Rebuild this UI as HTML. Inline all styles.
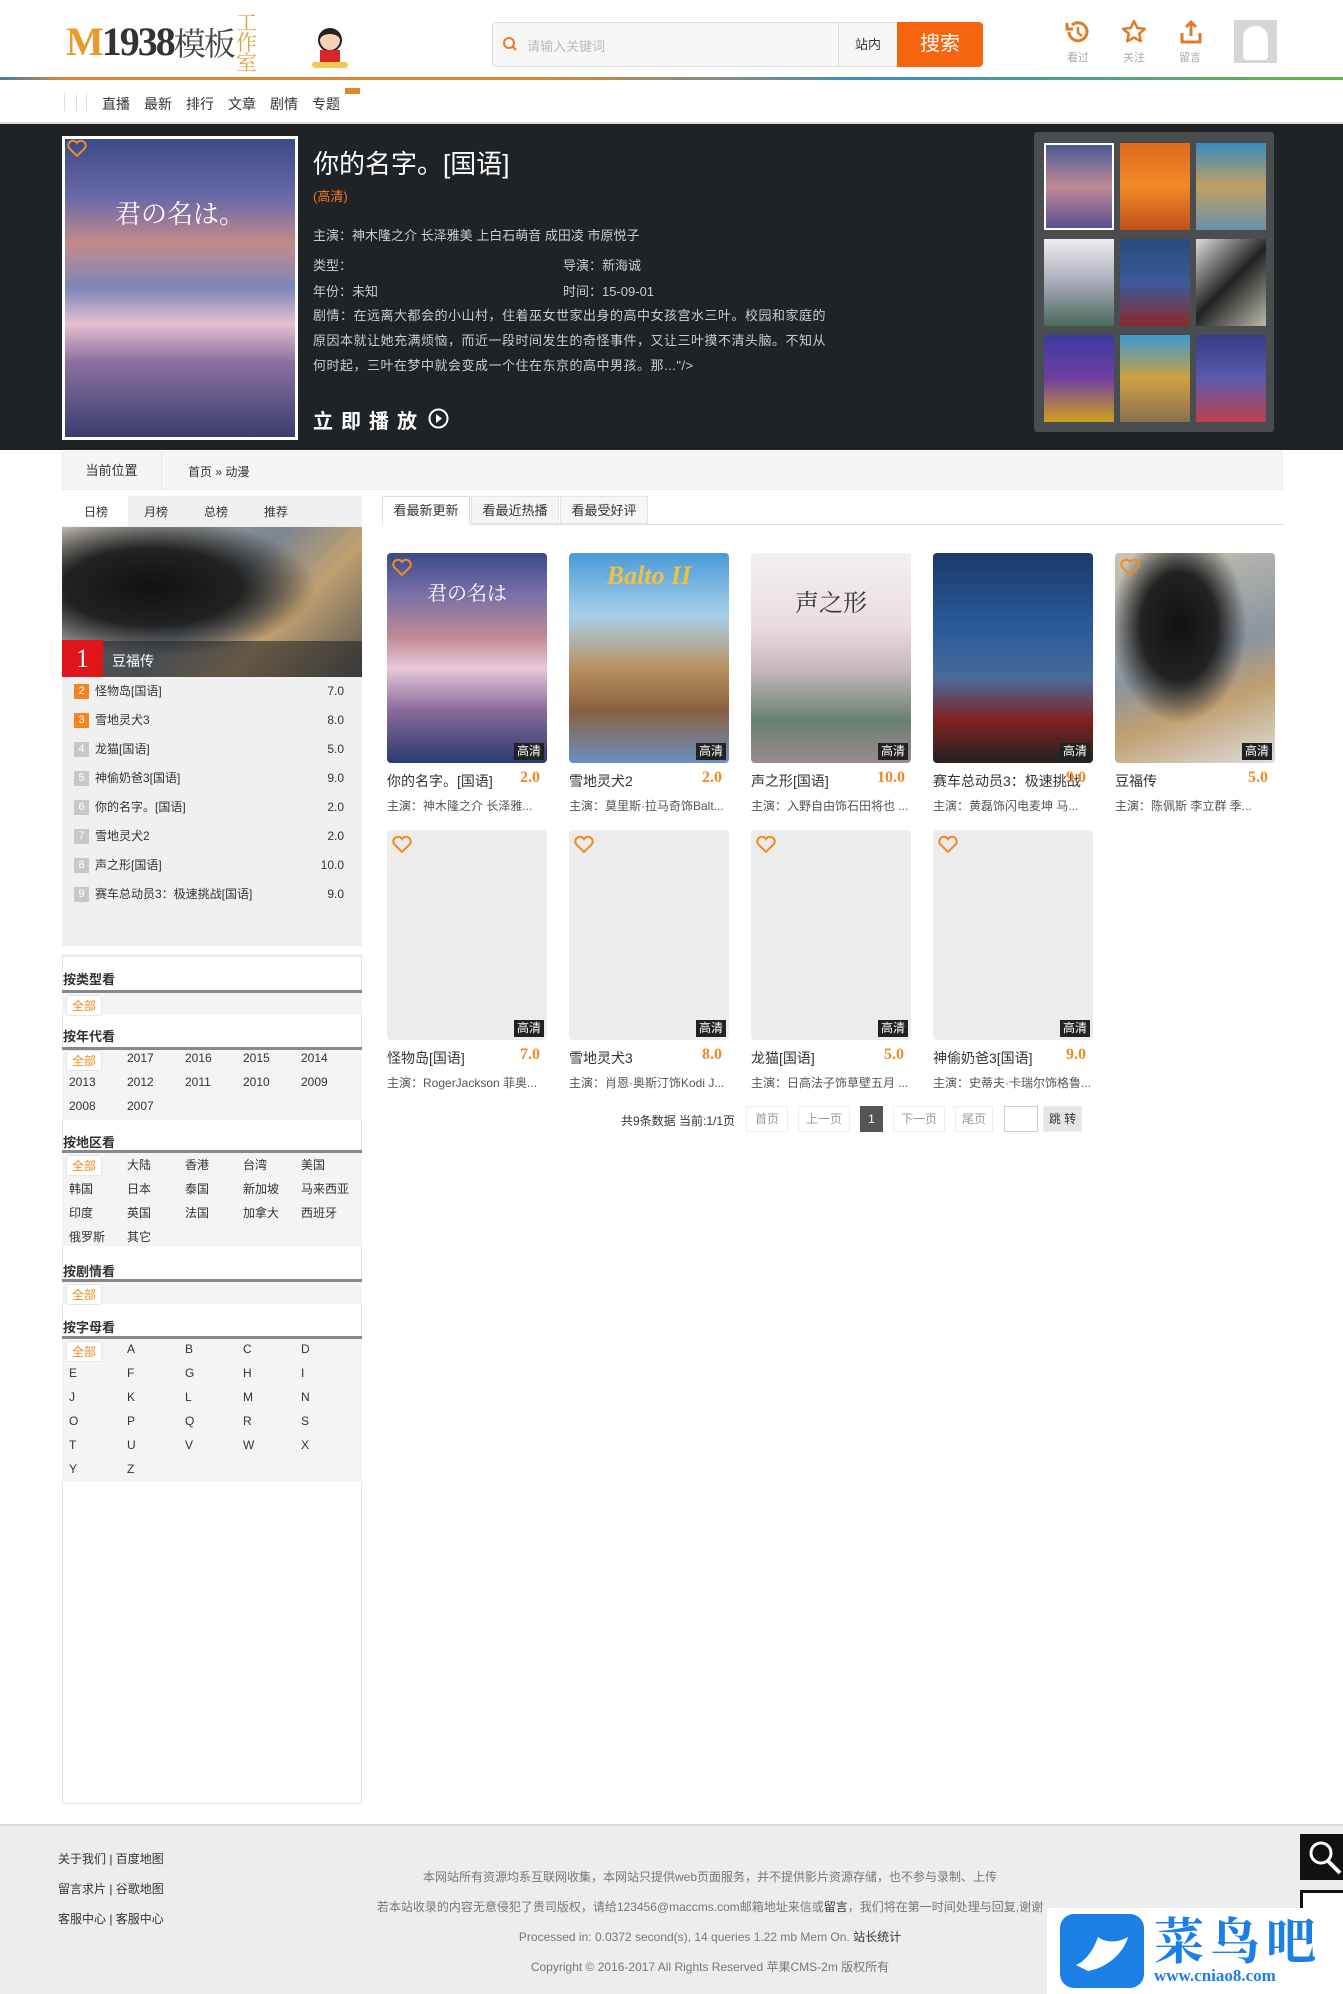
<!DOCTYPE html>
<html><head><meta charset="utf-8">
<style>
*{margin:0;padding:0;box-sizing:border-box}
body{width:1343px;height:1994px;position:relative;background:#fff;font-family:"Liberation Sans","Noto Sans CJK SC",sans-serif;font-size:12px;color:#333;overflow:hidden}
.a{position:absolute}
.hd{white-space:nowrap}
.poster{border-radius:4px;overflow:hidden}
.hq{position:absolute;right:3px;bottom:3px;background:#222;color:#fff;font-size:12px;padding:0 3px;line-height:17px}
.ttl{font-size:14px;color:#333}
.sc{font-family:"Liberation Serif",serif;font-weight:bold;color:#f08a24;font-size:16px}
.act{font-size:12px;color:#555}
.rk{font-size:12px;color:#333}
.num{display:inline-block;width:15px;height:15px;line-height:15px;text-align:center;color:#fff;font-size:11px;background:#c8c8c8;margin-right:6px;vertical-align:middle}
.fh{font-size:13px;color:#333;font-weight:bold}
.fl{position:absolute;left:62px;width:300px;border-top:3px solid #888;background:#f4f4f4}
.cell{position:absolute;font-size:12px;color:#333}
.all{color:#f08a24;background:#fff;border:1px solid #e5e5e5;border-radius:3px;padding:1px 5px}
.pg{position:absolute;top:1106px;height:26px;line-height:24px;border:1px solid #eee;color:#999;text-align:center;font-size:12px}
.ft{font-size:12px;color:#777}
</style></head><body>

<div class="a hd" style="left:66px;top:18px;font-family:'Liberation Serif',serif;font-size:40px;font-weight:bold;letter-spacing:-2px;color:#e89a2a;line-height:48px">M<span style="color:#333">1938</span><span style="color:#444;font-weight:normal;font-family:'Noto Serif CJK SC',serif;font-size:32px">模板</span></div>
<div class="a" style="left:236px;top:12px;width:28px;color:#e0a040;font-size:21px;line-height:20px;font-family:'Noto Serif CJK SC',serif">工<br>作<br>室</div>
<div class="a" style="left:318px;top:28px;width:24px;height:24px;border-radius:50%;background:#f3d3b3;border:2px solid #222;border-top-width:6px"></div>
<div class="a" style="left:320px;top:50px;width:20px;height:12px;background:#d7262b"></div>
<div class="a" style="left:312px;top:62px;width:36px;height:6px;background:#f2c94c;border-radius:3px"></div>

<div class="a" style="left:492px;top:22px;width:491px;height:45px;border:1px solid #ddd;border-radius:4px;background:#f7f7f7"></div>
<svg class="a" style="left:502px;top:36px" width="16" height="16" viewBox="0 0 16 16"><circle cx="7" cy="7" r="5" fill="none" stroke="#f0782a" stroke-width="2"/><path d="M10.5 10.5L14 14" stroke="#f0782a" stroke-width="2"/></svg>
<div class="a" style="left:527px;top:36px;color:#bbb;font-size:13px">请输入关键词</div>
<div class="a" style="left:838px;top:23px;width:59px;height:43px;border-left:1px solid #ddd;text-align:center;line-height:43px;font-size:13px">站内</div>
<div class="a" style="left:897px;top:22px;width:86px;height:45px;background:#f5640f;color:#fff;font-size:20px;text-align:center;line-height:45px;border-radius:0 4px 4px 0">搜索</div>

<svg class="a" style="left:1064px;top:18px" width="28" height="28" viewBox="0 0 28 28"><path d="M5 14a9 9 0 1 0 3-7" fill="none" stroke="#e07b2a" stroke-width="3"/><path d="M3 5v6h6" fill="none" stroke="#e07b2a" stroke-width="3"/><path d="M14 9v6l4 3" fill="none" stroke="#e07b2a" stroke-width="2.5"/></svg>
<svg class="a" style="left:1120px;top:18px" width="28" height="28" viewBox="0 0 28 28"><path d="M14 3l3.3 7 7.5.8-5.6 5 1.6 7.5L14 19.5 7.2 23.3 8.8 15.8 3.2 10.8l7.5-.8z" fill="none" stroke="#e07b2a" stroke-width="2.5" stroke-linejoin="round"/></svg>
<svg class="a" style="left:1177px;top:18px" width="28" height="28" viewBox="0 0 28 28"><path d="M5 15v9h18v-9" fill="none" stroke="#e07b2a" stroke-width="3"/><path d="M14 4v14M9 9l5-5 5 5" fill="none" stroke="#e07b2a" stroke-width="3"/></svg>
<div class="a" style="left:1067px;top:49px;font-size:11px;color:#aaa">看过</div>
<div class="a" style="left:1123px;top:49px;font-size:11px;color:#aaa">关注</div>
<div class="a" style="left:1179px;top:49px;font-size:11px;color:#aaa">留言</div>
<div class="a" style="left:1234px;top:20px;width:43px;height:43px;background:#d6d6d6;overflow:hidden"><div style="position:absolute;left:9px;top:6px;width:25px;height:34px;background:#fff;border-radius:12px 12px 4px 4px"></div></div>

<div class="a" style="left:0;top:77px;width:1343px;height:3px;background:linear-gradient(90deg,#3d7fa5 0%,#e0873a 5%,#d9883a 40%,#3d8fbf 65%,#6ab43f 100%)"></div>

<div class="a" style="left:64px;top:93px;width:1px;height:18px;background:#ddd"></div>
<div class="a" style="left:76px;top:93px;width:1px;height:18px;background:#ddd"></div>
<div class="a" style="left:86px;top:93px;width:1px;height:18px;background:#ddd"></div>
<div class="a hd" style="left:102px;top:94px;font-size:14px"><span style="margin-right:14px">直播</span><span style="margin-right:14px">最新</span><span style="margin-right:14px">排行</span><span style="margin-right:14px">文章</span><span style="margin-right:14px">剧情</span><span>专题</span></div>
<div class="a" style="left:345px;top:88px;width:15px;height:6px;background:#e08a2a"></div>
<div class="a" style="left:0;top:122px;width:1343px;height:2px;background:#ddd"></div>

<div class="a" style="left:0;top:124px;width:1343px;height:326px;background:#1f2326"></div>
<div class="a" style="left:62px;top:136px;width:236px;height:304px;border:3px solid #fff;background:linear-gradient(180deg,#3a4a85 0%,#6a6aa8 20%,#c58a8a 35%,#7b86b8 50%,#e6c0d0 62%,#8a70a0 75%,#3c3c70 100%)">
<div style="position:absolute;left:0;width:100%;top:55px;text-align:center;color:#fff;font-size:26px;font-family:'Noto Serif CJK SC',serif">君の名は。</div></div>
<div class="a hd" style="left:313px;top:144px;color:#fff;font-size:26px">你的名字。[国语]</div>
<div class="a" style="left:313px;top:186px;color:#f0782a;font-size:13px">(高清)</div>
<div class="a hd" style="left:313px;top:225px;color:#ccc;font-size:13px">主演：神木隆之介 长泽雅美 上白石萌音 成田凌 市原悦子</div>
<div class="a" style="left:313px;top:255px;color:#ccc;font-size:13px">类型：</div>
<div class="a" style="left:563px;top:255px;color:#ccc;font-size:13px">导演：新海诚</div>
<div class="a" style="left:313px;top:281px;color:#ccc;font-size:13px">年份：未知</div>
<div class="a" style="left:563px;top:281px;color:#ccc;font-size:13px">时间：15-09-01</div>
<div class="a" style="left:313px;top:303px;width:515px;color:#ccc;font-size:13px;letter-spacing:0.5px;line-height:25px">剧情：在远离大都会的小山村，住着巫女世家出身的高中女孩宫水三叶。校园和家庭的原因本就让她充满烦恼，而近一段时间发生的奇怪事件，又让三叶摸不清头脑。不知从何时起，三叶在梦中就会变成一个住在东京的高中男孩。那..."/&gt;</div>
<div class="a hd" style="left:313px;top:405px;color:#fff;font-size:20px;font-weight:bold;letter-spacing:8px">立即播放</div>
<svg class="a" style="left:428px;top:408px" width="21" height="21" viewBox="0 0 21 21"><circle cx="10.5" cy="10.5" r="9" fill="none" stroke="#fff" stroke-width="2"/><path d="M8 6l6 4.5-6 4.5z" fill="#fff"/></svg>

<div class="a" style="left:1034px;top:132px;width:240px;height:300px;background:#4a4d50;border-radius:3px"></div>
<div class="a" style="left:1044px;top:143px;width:70px;height:87px;border:2px solid #fff;background:linear-gradient(#4a5a95,#c08a95,#5a5090)"></div>
<div class="a" style="left:1120px;top:143px;width:70px;height:87px;background:linear-gradient(#e06a1a,#f08a2a,#c0501a)"></div>
<div class="a" style="left:1196px;top:143px;width:70px;height:87px;background:linear-gradient(#3a8ac0,#c0a060,#6a90b0)"></div>
<div class="a" style="left:1044px;top:239px;width:70px;height:87px;background:linear-gradient(#eee,#aab,#4a6a5a)"></div>
<div class="a" style="left:1120px;top:239px;width:70px;height:87px;background:linear-gradient(#2a4a7a,#3a5a9a,#8a2a2a)"></div>
<div class="a" style="left:1196px;top:239px;width:70px;height:87px;background:linear-gradient(135deg,#ddd,#222 50%,#bba)"></div>
<div class="a" style="left:1044px;top:335px;width:70px;height:87px;background:linear-gradient(#3a3aa0,#7040a0,#d0a020)"></div>
<div class="a" style="left:1120px;top:335px;width:70px;height:87px;background:linear-gradient(#3a9ad0,#d0a040,#8a7050)"></div>
<div class="a" style="left:1196px;top:335px;width:70px;height:87px;background:linear-gradient(#3a3a8a,#5a5aaa,#c04050)"></div>

<div class="a" style="left:62px;top:451px;width:1221px;height:39px;background:#f5f5f5;border:1px solid #eee"></div>
<div class="a" style="left:62px;top:451px;width:100px;height:39px;border-right:1px solid #e5e5e5;text-align:center;line-height:39px;font-size:13px">当前位置</div>
<div class="a" style="left:188px;top:463px;font-size:12px">首页 » 动漫</div>

<div class="a" style="left:62px;top:496px;width:300px;height:450px;background:#f0f0f0"></div>
<div class="a" style="left:62px;top:496px;width:66px;height:30px;background:#fff"></div>
<div class="a hd" style="left:84px;top:503px;font-size:12px"><span style="margin-right:36px">日榜</span><span style="margin-right:36px">月榜</span><span style="margin-right:36px">总榜</span><span>推荐</span></div>
<div class="a" style="left:62px;top:527px;width:300px;height:150px;background:radial-gradient(ellipse at 30% 40%,#111 0%,#222 30%,transparent 55%),linear-gradient(135deg,#bcb5a8,#7a8590 50%,#c0a070 70%,#555)"></div>
<div class="a" style="left:62px;top:641px;width:300px;height:36px;background:rgba(40,40,40,.6)"></div>
<div class="a" style="left:62px;top:640px;width:41px;height:37px;background:#e0151a;color:#fff;font-size:26px;text-align:center;line-height:37px;font-family:'Liberation Serif',serif">1</div>
<div class="a" style="left:112px;top:651px;color:#fff;font-size:14px">豆福传</div>
<div class="a" style="left:74px;top:683px;width:270px">
<div style="height:29px;line-height:17px" class="rk"><span class="num" style="background:#f5831f">2</span>怪物岛[国语]<span style="float:right">7.0</span></div>
<div style="height:29px;line-height:17px" class="rk"><span class="num" style="background:#f5831f">3</span>雪地灵犬3<span style="float:right">8.0</span></div>
<div style="height:29px;line-height:17px" class="rk"><span class="num">4</span>龙猫[国语]<span style="float:right">5.0</span></div>
<div style="height:29px;line-height:17px" class="rk"><span class="num">5</span>神偷奶爸3[国语]<span style="float:right">9.0</span></div>
<div style="height:29px;line-height:17px" class="rk"><span class="num">6</span>你的名字。[国语]<span style="float:right">2.0</span></div>
<div style="height:29px;line-height:17px" class="rk"><span class="num">7</span>雪地灵犬2<span style="float:right">2.0</span></div>
<div style="height:29px;line-height:17px" class="rk"><span class="num">8</span>声之形[国语]<span style="float:right">10.0</span></div>
<div style="height:29px;line-height:17px" class="rk"><span class="num">9</span>赛车总动员3：极速挑战[国语]<span style="float:right">9.0</span></div>
</div>

<div class="a" style="left:62px;top:954px;width:300px;height:850px;border:1px solid #e5e5e5;border-top:3px solid #eee"></div>
<div class="a fh" style="left:63px;top:969px">按类型看</div>
<div class="fl" style="top:990px;height:24px"></div>
<div class="cell all" style="left:66px;top:995px">全部</div>

<div class="a fh" style="left:63px;top:1026px">按年代看</div>
<div class="fl" style="top:1047px;height:73px"></div>
<div class="cell all" style="left:66px;top:1050px">全部</div>
<div class="cell" style="left:127px;top:1051px">2017</div><div class="cell" style="left:185px;top:1051px">2016</div><div class="cell" style="left:243px;top:1051px">2015</div><div class="cell" style="left:301px;top:1051px">2014</div>
<div class="cell" style="left:69px;top:1075px">2013</div><div class="cell" style="left:127px;top:1075px">2012</div><div class="cell" style="left:185px;top:1075px">2011</div><div class="cell" style="left:243px;top:1075px">2010</div><div class="cell" style="left:301px;top:1075px">2009</div>
<div class="cell" style="left:69px;top:1099px">2008</div><div class="cell" style="left:127px;top:1099px">2007</div>

<div class="a fh" style="left:63px;top:1132px">按地区看</div>
<div class="fl" style="top:1150px;height:96px"></div>
<div class="cell all" style="left:66px;top:1155px">全部</div>
<div class="cell" style="left:127px;top:1156px">大陆</div><div class="cell" style="left:185px;top:1156px">香港</div><div class="cell" style="left:243px;top:1156px">台湾</div><div class="cell" style="left:301px;top:1156px">美国</div>
<div class="cell" style="left:69px;top:1180px">韩国</div><div class="cell" style="left:127px;top:1180px">日本</div><div class="cell" style="left:185px;top:1180px">泰国</div><div class="cell" style="left:243px;top:1180px">新加坡</div><div class="cell" style="left:301px;top:1180px">马来西亚</div>
<div class="cell" style="left:69px;top:1204px">印度</div><div class="cell" style="left:127px;top:1204px">英国</div><div class="cell" style="left:185px;top:1204px">法国</div><div class="cell" style="left:243px;top:1204px">加拿大</div><div class="cell" style="left:301px;top:1204px">西班牙</div>
<div class="cell" style="left:69px;top:1228px">俄罗斯</div><div class="cell" style="left:127px;top:1228px">其它</div>

<div class="a fh" style="left:63px;top:1261px">按剧情看</div>
<div class="fl" style="top:1279px;height:25px"></div>
<div class="cell all" style="left:66px;top:1284px">全部</div>

<div class="a fh" style="left:63px;top:1317px">按字母看</div>
<div class="fl" style="top:1336px;height:146px"></div>
<div class="cell all" style="left:66px;top:1341px">全部</div>
<div class="cell" style="left:127px;top:1342px">A</div><div class="cell" style="left:185px;top:1342px">B</div><div class="cell" style="left:243px;top:1342px">C</div><div class="cell" style="left:301px;top:1342px">D</div>
<div class="cell" style="left:69px;top:1366px">E</div><div class="cell" style="left:127px;top:1366px">F</div><div class="cell" style="left:185px;top:1366px">G</div><div class="cell" style="left:243px;top:1366px">H</div><div class="cell" style="left:301px;top:1366px">I</div>
<div class="cell" style="left:69px;top:1390px">J</div><div class="cell" style="left:127px;top:1390px">K</div><div class="cell" style="left:185px;top:1390px">L</div><div class="cell" style="left:243px;top:1390px">M</div><div class="cell" style="left:301px;top:1390px">N</div>
<div class="cell" style="left:69px;top:1414px">O</div><div class="cell" style="left:127px;top:1414px">P</div><div class="cell" style="left:185px;top:1414px">Q</div><div class="cell" style="left:243px;top:1414px">R</div><div class="cell" style="left:301px;top:1414px">S</div>
<div class="cell" style="left:69px;top:1438px">T</div><div class="cell" style="left:127px;top:1438px">U</div><div class="cell" style="left:185px;top:1438px">V</div><div class="cell" style="left:243px;top:1438px">W</div><div class="cell" style="left:301px;top:1438px">X</div>
<div class="cell" style="left:69px;top:1462px">Y</div><div class="cell" style="left:127px;top:1462px">Z</div>

<div class="a" style="left:382px;top:524px;width:901px;height:1px;background:#ddd"></div>
<div class="a" style="left:382px;top:496px;width:88px;height:29px;border:1px solid #ddd;border-bottom-color:#fff;background:#fff;text-align:center;line-height:27px;font-size:13px">看最新更新</div>
<div class="a" style="left:471px;top:496px;width:88px;height:28px;border:1px solid #e5e5e5;background:#f5f5f5;text-align:center;line-height:27px;font-size:13px">看最近热播</div>
<div class="a" style="left:560px;top:496px;width:88px;height:28px;border:1px solid #e5e5e5;background:#f5f5f5;text-align:center;line-height:27px;font-size:13px">看最受好评</div>

<div class="a poster" style="left:387px;top:553px;width:160px;height:210px;background:linear-gradient(180deg,#3a4a8a 0%,#7a70a8 20%,#c08a95 40%,#e8c8d8 55%,#8a6a9a 75%,#2a3a70 100%)"><div style="position:absolute;top:24px;width:100%;text-align:center;color:#fff;font-size:20px;font-family:'Noto Serif CJK SC',serif">君の名は</div><span class="hq">高清</span></div>
<div class="a poster" style="left:569px;top:553px;width:160px;height:210px;background:linear-gradient(180deg,#4a9ad8 0%,#a8d0e8 30%,#b89060 55%,#8a6040 75%,#6a90c0 100%)"><div style="position:absolute;top:8px;width:100%;text-align:center;color:#f0c040;font-size:26px;font-style:italic;font-family:'Liberation Serif',serif;font-weight:bold">Balto II</div><span class="hq">高清</span></div>
<div class="a poster" style="left:751px;top:553px;width:160px;height:210px;background:linear-gradient(180deg,#f4f0f0 0%,#eadce0 35%,#c8b8c0 55%,#6a8070 80%,#9a8a90 100%)"><div style="position:absolute;top:30px;width:100%;text-align:center;color:#333;font-size:24px;font-family:'Noto Serif CJK SC',serif">声之形</div><span class="hq">高清</span></div>
<div class="a poster" style="left:933px;top:553px;width:160px;height:210px;background:linear-gradient(180deg,#1a3a6a 0%,#2a5a9a 35%,#4a6a9a 60%,#802020 80%,#222 100%)"><span class="hq">高清</span></div>
<div class="a poster" style="left:1115px;top:553px;width:160px;height:210px;background:radial-gradient(ellipse at 40% 35%,#111 0%,#222 28%,transparent 50%),linear-gradient(160deg,#ccc5b5,#8a95a0 50%,#c0a070 70%,#ddd)"><span class="hq">高清</span></div>

<div class="a ttl hd" style="left:387px;top:771px">你的名字。[国语]</div><div class="a sc" style="left:520px;top:769px">2.0</div>
<div class="a ttl hd" style="left:569px;top:771px">雪地灵犬2</div><div class="a sc" style="left:702px;top:769px">2.0</div>
<div class="a ttl hd" style="left:751px;top:771px">声之形[国语]</div><div class="a sc" style="left:877px;top:769px">10.0</div>
<div class="a ttl hd" style="left:933px;top:771px">赛车总动员3：极速挑战</div><div class="a sc" style="left:1066px;top:769px">9.0</div>
<div class="a ttl hd" style="left:1115px;top:771px">豆福传</div><div class="a sc" style="left:1248px;top:769px">5.0</div>
<div class="a act hd" style="left:387px;top:797px">主演：神木隆之介 长泽雅...</div>
<div class="a act hd" style="left:569px;top:797px">主演：莫里斯·拉马奇饰Balt...</div>
<div class="a act hd" style="left:751px;top:797px">主演：入野自由饰石田将也 ...</div>
<div class="a act hd" style="left:933px;top:797px">主演：黄磊饰闪电麦坤 马...</div>
<div class="a act hd" style="left:1115px;top:797px">主演：陈佩斯 李立群 季...</div>

<div class="a poster" style="left:387px;top:830px;width:160px;height:210px;background:#ececec"><span class="hq">高清</span></div>
<div class="a poster" style="left:569px;top:830px;width:160px;height:210px;background:#ececec"><span class="hq">高清</span></div>
<div class="a poster" style="left:751px;top:830px;width:160px;height:210px;background:#ececec"><span class="hq">高清</span></div>
<div class="a poster" style="left:933px;top:830px;width:160px;height:210px;background:#ececec"><span class="hq">高清</span></div>
<svg class="a" style="left:391px;top:834px" width="22" height="20" viewBox="0 0 22 20"><path d="M11 18L3 10a4.5 4.5 0 0 1 8-5 4.5 4.5 0 0 1 8 5z" fill="none" stroke="#f08a24" stroke-width="2"/></svg>
<svg class="a" style="left:573px;top:834px" width="22" height="20" viewBox="0 0 22 20"><path d="M11 18L3 10a4.5 4.5 0 0 1 8-5 4.5 4.5 0 0 1 8 5z" fill="none" stroke="#f08a24" stroke-width="2"/></svg>
<svg class="a" style="left:755px;top:834px" width="22" height="20" viewBox="0 0 22 20"><path d="M11 18L3 10a4.5 4.5 0 0 1 8-5 4.5 4.5 0 0 1 8 5z" fill="none" stroke="#f08a24" stroke-width="2"/></svg>
<svg class="a" style="left:937px;top:834px" width="22" height="20" viewBox="0 0 22 20"><path d="M11 18L3 10a4.5 4.5 0 0 1 8-5 4.5 4.5 0 0 1 8 5z" fill="none" stroke="#f08a24" stroke-width="2"/></svg>
<svg class="a" style="left:391px;top:557px" width="22" height="20" viewBox="0 0 22 20"><path d="M11 18L3 10a4.5 4.5 0 0 1 8-5 4.5 4.5 0 0 1 8 5z" fill="none" stroke="#f08a24" stroke-width="2"/></svg>
<svg class="a" style="left:1119px;top:557px" width="22" height="20" viewBox="0 0 22 20"><path d="M11 18L3 10a4.5 4.5 0 0 1 8-5 4.5 4.5 0 0 1 8 5z" fill="none" stroke="#f08a24" stroke-width="2"/></svg>
<svg class="a" style="left:66px;top:138px" width="22" height="20" viewBox="0 0 22 20"><path d="M11 18L3 10a4.5 4.5 0 0 1 8-5 4.5 4.5 0 0 1 8 5z" fill="none" stroke="#f08a24" stroke-width="2"/></svg>

<div class="a ttl hd" style="left:387px;top:1048px">怪物岛[国语]</div><div class="a sc" style="left:520px;top:1046px">7.0</div>
<div class="a ttl hd" style="left:569px;top:1048px">雪地灵犬3</div><div class="a sc" style="left:702px;top:1046px">8.0</div>
<div class="a ttl hd" style="left:751px;top:1048px">龙猫[国语]</div><div class="a sc" style="left:884px;top:1046px">5.0</div>
<div class="a ttl hd" style="left:933px;top:1048px">神偷奶爸3[国语]</div><div class="a sc" style="left:1066px;top:1046px">9.0</div>
<div class="a act hd" style="left:387px;top:1074px">主演：RogerJackson 菲奥...</div>
<div class="a act hd" style="left:569px;top:1074px">主演：肖恩·奥斯汀饰Kodi J...</div>
<div class="a act hd" style="left:751px;top:1074px">主演：日高法子饰草壁五月 ...</div>
<div class="a act hd" style="left:933px;top:1074px">主演：史蒂夫·卡瑞尔饰格鲁...</div>

<div class="a hd" style="left:621px;top:1112px;font-size:12px">共9条数据 当前:1/1页</div>
<div class="pg" style="left:746px;width:42px">首页</div>
<div class="pg" style="left:798px;width:52px">上一页</div>
<div class="pg" style="left:860px;width:23px;background:#555;color:#fff;border-color:#555">1</div>
<div class="pg" style="left:893px;width:52px">下一页</div>
<div class="pg" style="left:955px;width:38px">尾页</div>
<div class="pg" style="left:1004px;width:34px;border-color:#ccc"></div>
<div class="pg" style="left:1043px;width:39px;background:#e5e5e5;color:#333">跳 转</div>

<div class="a" style="left:0;top:1824px;width:1343px;height:170px;background:#ededed;border-top:2px solid #ddd"></div>
<div class="a hd" style="left:58px;top:1850px;font-size:12px;color:#333">关于我们 | 百度地图</div>
<div class="a hd" style="left:58px;top:1880px;font-size:12px;color:#333">留言求片 | 谷歌地图</div>
<div class="a hd" style="left:58px;top:1910px;font-size:12px;color:#333">客服中心 | 客服中心</div>
<div class="a ft hd" style="left:0;width:1420px;text-align:center;top:1868px">本网站所有资源均系互联网收集，本网站只提供web页面服务，并不提供影片资源存储，也不参与录制、上传</div>
<div class="a ft hd" style="left:0;width:1420px;text-align:center;top:1898px">若本站收录的内容无意侵犯了贵司版权，请给123456@maccms.com邮箱地址来信或<span style="color:#333">留言</span>，我们将在第一时间处理与回复,谢谢</div>
<div class="a ft hd" style="left:0;width:1420px;text-align:center;top:1928px">Processed in: 0.0372 second(s), 14 queries 1.22 mb Mem On. <span style="color:#333">站长统计</span></div>
<div class="a ft hd" style="left:0;width:1420px;text-align:center;top:1958px">Copyright © 2016-2017 All Rights Reserved 苹果CMS-2m 版权所有</div>

<div class="a" style="left:1300px;top:1834px;width:43px;height:46px;background:#111"></div>
<svg class="a" style="left:1306px;top:1838px" width="37" height="38" viewBox="0 0 37 38"><circle cx="15" cy="15" r="10" fill="none" stroke="#fff" stroke-width="3"/><path d="M22 23l12 12" stroke="#fff" stroke-width="4"/></svg>
<div class="a" style="left:1300px;top:1890px;width:43px;height:30px;border:3px solid #111;border-right:none;background:#fff"></div>
<div class="a" style="left:1047px;top:1908px;width:296px;height:86px;background:#fff"></div>
<div class="a" style="left:1060px;top:1914px;width:84px;height:74px;background:#1c7fe6;border-radius:14px"></div>
<svg class="a" style="left:1070px;top:1925px" width="64" height="52" viewBox="0 0 64 52"><path d="M6 40c10-4 18-16 22-28 8 6 20 6 30 0-4 14-18 30-40 34z" fill="#fff"/></svg>
<div class="a hd" style="left:1154px;top:1908px;font-size:50px;font-weight:bold;color:#1c7fe6;letter-spacing:6px;font-family:'Noto Serif CJK SC',serif;line-height:60px">菜鸟吧</div>
<div class="a hd" style="left:1154px;top:1966px;font-size:17px;font-weight:bold;color:#1c7fe6;font-family:'Liberation Serif',serif">www.cniao8.com</div>
</body></html>
